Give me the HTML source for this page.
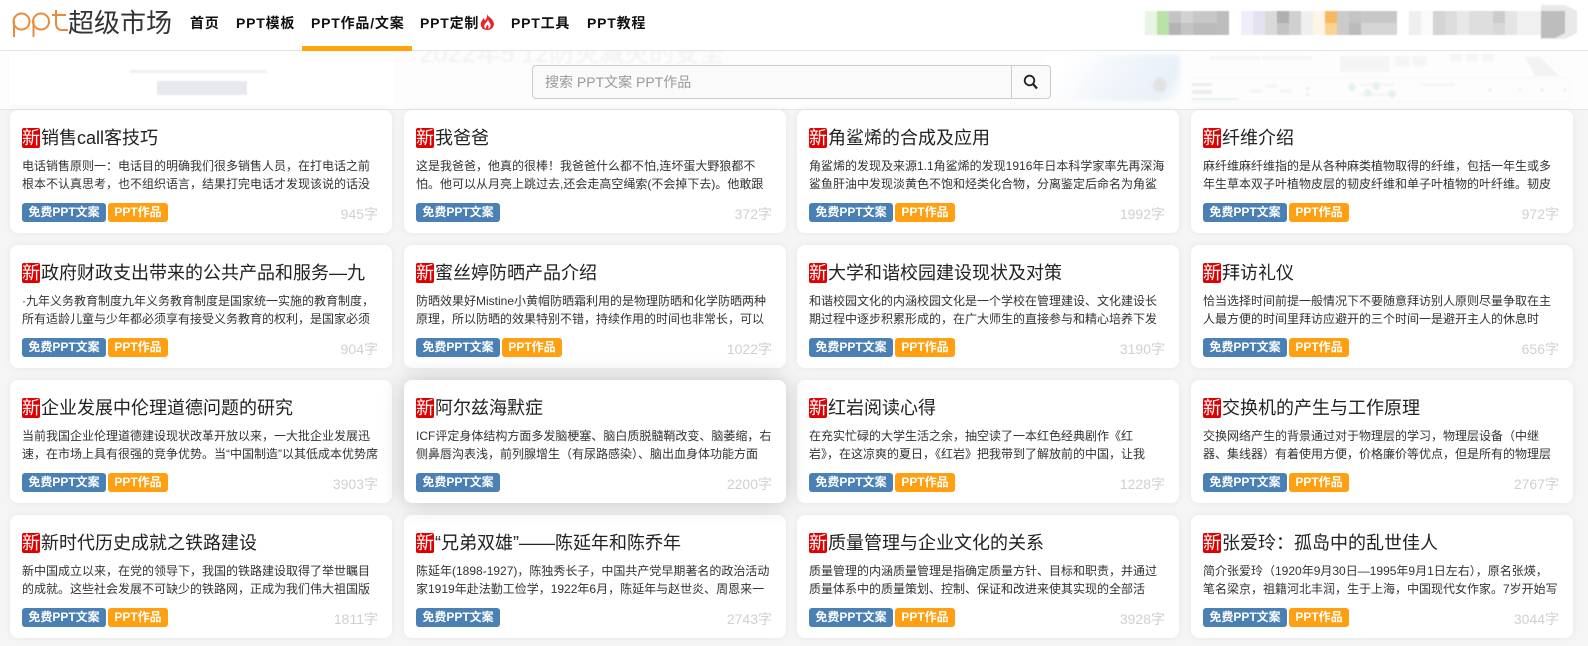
<!DOCTYPE html>
<html lang="zh-CN"><head><meta charset="utf-8"><title>PPT超级市场</title>
<style>
*{box-sizing:border-box;margin:0;padding:0}
html,body{width:1588px;height:646px;overflow:hidden;background:#f5f5f5;font-family:"Liberation Sans","Noto Sans CJK SC",sans-serif}
#hd{position:absolute;left:0;top:0;width:1588px;height:51px;background:#fff;border-bottom:1px solid #e4e4e4;z-index:3}
#hd a{position:absolute;top:13px;font-size:14px;line-height:20px;font-weight:bold;color:#111;letter-spacing:.8px;white-space:nowrap}
#bar{position:absolute;left:302px;top:46px;width:110px;height:5px;background:#ffa40a}
#logo{position:absolute;left:68px;top:6px;font-size:26px;line-height:34px;color:#333;white-space:nowrap}
#ban{position:absolute;left:0;top:51px;width:1588px;height:59px;background:#fdfdfd;border-bottom:1px solid #e6e6e6;overflow:hidden}
#sb{position:absolute;left:532px;top:65px;width:519px;height:34px;background:#fafafa;border:1px solid #ccc;border-radius:4px;z-index:2}
#sb span{position:absolute;left:12px;top:7px;font-size:14px;line-height:18px;color:#999}
#sb i{position:absolute;left:478px;top:0;width:1px;height:32px;background:#ccc}
.c{position:absolute;width:382px;height:123px;background:#fff;border-radius:8px;box-shadow:0 0 8px rgba(0,0,0,.06);overflow:hidden}
.c.h{box-shadow:0 0 24px rgba(0,0,0,.2);z-index:1}
.t{position:absolute;left:12px;top:16px;height:24px;line-height:24px;font-size:18px;color:#222;white-space:nowrap}
.t b{display:inline-block;width:18px;height:20px;line-height:20px;background:#e00000;color:#fff;font-weight:normal;font-size:18px;border-radius:2px;vertical-align:-4px;text-align:center;overflow:hidden;margin-right:1px}
.d{position:absolute;left:12px;top:47px;width:362px;height:36px;line-height:18px;font-size:12px;color:#333;overflow:hidden;white-space:nowrap}
.g{position:absolute;top:93px;height:19px;line-height:18px;text-align:center;font-size:12px;font-weight:bold;color:#fff;border-radius:3px;white-space:nowrap}
.a{left:12px;width:84px;background:#4a80b4}
.b{left:98px;width:60px;background:#ff9f12}
.n{position:absolute;right:14px;top:94px;line-height:20px;font-size:14px;color:#d0d0d0}
</style></head><body>
<div id="hd">
<svg style="position:absolute;left:12px;top:10px" width="58" height="28" viewBox="0 0 58 28" fill="none" stroke="#ec8a3c" stroke-width="2"><rect x="1.500" y="3.500" width="16" height="16" rx="8"/><path d="M2 11V27"/><rect x="21" y="3.500" width="16" height="16" rx="8"/><path d="M21.500 11V27"/><path d="M44 0V13Q44 20 50 20H56M40 5H54"/></svg>
<div id="logo">超级市场</div>
<a style="left:190px">首页</a><a style="left:236px">PPT模板</a><a style="left:311px">PPT作品/文案</a><a style="left:420px">PPT定制</a>
<svg style="position:absolute;left:480px;top:14px" width="15" height="16" viewBox="0 0 15 16"><path fill="#e8262a" d="M7 0C8 3 12 4 13.500 8C15 12 12 16 7.500 16C3 16 0 13 1 8.500C1.500 6.500 3 5.500 3.500 4C4.500 5 4.500 6 5 6.500C6.500 5 7.500 3 7 0Z"/><path fill="#fff" d="M8 5C8 8 11 9 10.500 12C10 14 9 14.500 8 15C9 13 8.500 11.500 7.500 10.500C7 12 5.500 12.500 6 15C4.500 14 4 12.500 4.500 11C5 9 8 8 8 5Z"/></svg>
<a style="left:511px">PPT工具</a><a style="left:587px">PPT教程</a>
<div id="bar"></div>
<svg style="position:absolute;left:1145px;top:5px;filter:blur(.6px)" width="432" height="36" viewBox="0 0 432 36">
<g fill="#e8f4e4"><rect x="0" y="6" width="12" height="24"/></g><rect x="12" y="6" width="12" height="24" fill="#b9e1a8"/>
<rect x="24" y="6" width="12" height="12" fill="#c4c4c4"/><rect x="24" y="18" width="12" height="12" fill="#b4b4b4"/>
<rect x="36" y="6" width="12" height="12" fill="#d2d2d2"/><rect x="36" y="18" width="12" height="12" fill="#c4c4c4"/>
<rect x="48" y="6" width="24" height="12" fill="#c8c8c8"/><rect x="48" y="18" width="24" height="12" fill="#bbb"/>
<rect x="72" y="6" width="12" height="24" fill="#bdbdbd"/>
<rect x="96" y="6" width="12" height="24" fill="#eeeef8"/><rect x="108" y="6" width="12" height="24" fill="#e4e2f0"/>
<rect x="120" y="6" width="12" height="24" fill="#dadada"/><rect x="132" y="6" width="12" height="12" fill="#b0b0b0"/><rect x="132" y="18" width="12" height="12" fill="#c4c4c4"/>
<rect x="144" y="6" width="12" height="24" fill="#d0d0d0"/><rect x="156" y="6" width="12" height="24" fill="#efefef"/><rect x="168" y="6" width="12" height="24" fill="#fff4e8"/>
<rect x="180" y="6" width="12" height="12" fill="#f6b860"/><rect x="180" y="18" width="12" height="12" fill="#fad490"/>
<rect x="192" y="6" width="12" height="24" fill="#cbcbcb"/><rect x="204" y="6" width="12" height="12" fill="#c4c4c4"/><rect x="204" y="18" width="12" height="12" fill="#bbb"/>
<rect x="216" y="6" width="36" height="12" fill="#c8c8c8"/><rect x="216" y="18" width="36" height="12" fill="#d6d6d6"/>
<rect x="264" y="6" width="12" height="24" fill="#efefef"/><rect x="276" y="6" width="12" height="24" fill="#fafafa"/>
<rect x="288" y="6" width="12" height="24" fill="#d4d4d4"/><rect x="300" y="6" width="12" height="24" fill="#dcdcdc"/><rect x="312" y="6" width="12" height="24" fill="#e8e8e8"/>
<rect x="324" y="6" width="24" height="24" fill="#dedede"/><rect x="348" y="6" width="12" height="12" fill="#ccc"/><rect x="348" y="18" width="12" height="12" fill="#d8d8d8"/>
<rect x="360" y="6" width="12" height="24" fill="#e4e4e4"/><rect x="372" y="6" width="24" height="24" fill="#f0f0f0"/>
<path d="M396 0H420L432 6V28L420 34H396Z" fill="#e9e9e9"/><path d="M396 6H420V28L410 33H396Z" fill="#bdbdbd"/>
</svg>
</div>
<div id="ban">
<div style="position:absolute;left:8px;top:3px;width:388px;height:52px;border:1px solid #fafafa;background:#fff"></div>
<div style="position:absolute;left:130px;top:19px;width:137px;height:3px;background:#f0f0f0;filter:blur(.6px)"></div>
<div style="position:absolute;left:157px;top:30px;width:90px;height:14px;background:#e6e8ec;filter:blur(.5px)"></div>
<div style="position:absolute;left:420px;top:-13px;font-size:25px;line-height:32px;color:#f0f0f0;white-space:nowrap;filter:blur(1px)">2022年5 12防灾减灾的安全</div>
<div style="position:absolute;left:1045px;top:4px;width:135px;height:46px;background:linear-gradient(125deg,#fff 15%,#eef4fa 60%,#e8f0f8 85%,#fff 100%);filter:blur(2px)"></div>
<div style="position:absolute;left:1153px;top:27px;width:14px;height:14px;border-radius:50%;background:#e2e2e2;filter:blur(1px)"></div>
<svg style="position:absolute;left:1190px;top:0;filter:blur(.9px);opacity:.5" width="390" height="56" viewBox="0 0 390 56">
<rect x="0" y="27" width="380" height="24" fill="none" stroke="#f3f3f3"/>
<rect x="2" y="32" width="20" height="3" fill="#ddd"/><rect x="2" y="39" width="20" height="4" fill="#ddd"/><rect x="2" y="47" width="46" height="2" fill="#cfe6dc"/>
<g fill="#eee"><rect x="60" y="38" width="12" height="4"/><rect x="75" y="33" width="12" height="4"/><rect x="90" y="38" width="12" height="4"/><rect x="20" y="5" width="50" height="4"/><rect x="72" y="5" width="50" height="4"/><rect x="150" y="5" width="50" height="16"/><rect x="205" y="5" width="15" height="10"/><rect x="222" y="5" width="15" height="10"/><rect x="260" y="3" width="12" height="8"/><rect x="276" y="3" width="12" height="8"/><rect x="292" y="3" width="12" height="8"/><rect x="230" y="32" width="35" height="3"/><rect x="170" y="32" width="35" height="3"/><rect x="170" y="42" width="35" height="3"/></g>
<g fill="#d2e8de"><circle cx="162" cy="36" r="4"/><circle cx="178" cy="42" r="4"/><circle cx="186" cy="35" r="4"/><circle cx="202" cy="43" r="4"/></g>
<g fill="#ddd"><circle cx="300" cy="39" r="1.500"/><circle cx="330" cy="39" r="1.500"/><circle cx="352" cy="39" r="1.500"/><circle cx="375" cy="39" r="1.500"/><rect x="116" y="36" width="3" height="3"/><rect x="116" y="42" width="3" height="3"/></g>
<path d="M335 6L350 6L370 25L345 25Z" fill="#eaeaea"/></svg>
</div>
<div id="sb"><span>搜索 PPT文案 PPT作品</span><i></i>
<svg style="position:absolute;left:490px;top:8px" width="16" height="16" viewBox="0 0 16 16" fill="none" stroke="#222" stroke-width="1.800"><circle cx="6.500" cy="6.500" r="4.800"/><path d="M10 10L14 14.500" stroke-width="2.200"/></svg></div>

<div class="c" style="left:10px;top:110px"><div class="t"><b>新</b>销售call客技巧</div><div class="d">电话销售原则一：电话目的明确我们很多销售人员，在打电话之前<br>根本不认真思考，也不组织语言，结果打完电话才发现该说的话没</div><span class="g a">免费PPT文案</span><span class="g b">PPT作品</span><span class="n">945字</span></div>
<div class="c" style="left:404px;top:110px"><div class="t"><b>新</b>我爸爸</div><div class="d">这是我爸爸，他真的很棒！我爸爸什么都不怕,连坏蛋大野狼都不<br>怕。他可以从月亮上跳过去,还会走高空绳索(不会掉下去)。他敢跟</div><span class="g a">免费PPT文案</span><span class="n">372字</span></div>
<div class="c" style="left:797px;top:110px"><div class="t"><b>新</b>角鲨烯的合成及应用</div><div class="d">角鲨烯的发现及来源1.1角鲨烯的发现1916年日本科学家率先再深海<br>鲨鱼肝油中发现淡黄色不饱和烃类化合物，分离鉴定后命名为角鲨</div><span class="g a">免费PPT文案</span><span class="g b">PPT作品</span><span class="n">1992字</span></div>
<div class="c" style="left:1191px;top:110px"><div class="t"><b>新</b>纤维介绍</div><div class="d">麻纤维麻纤维指的是从各种麻类植物取得的纤维，包括一年生或多<br>年生草本双子叶植物皮层的韧皮纤维和单子叶植物的叶纤维。韧皮</div><span class="g a">免费PPT文案</span><span class="g b">PPT作品</span><span class="n">972字</span></div>

<div class="c" style="left:10px;top:245px"><div class="t"><b>新</b>政府财政支出带来的公共产品和服务—九</div><div class="d">·九年义务教育制度九年义务教育制度是国家统一实施的教育制度，<br>所有适龄儿童与少年都必须享有接受义务教育的权利，是国家必须</div><span class="g a">免费PPT文案</span><span class="g b">PPT作品</span><span class="n">904字</span></div>
<div class="c" style="left:404px;top:245px"><div class="t"><b>新</b>蜜丝婷防晒产品介绍</div><div class="d">防晒效果好Mistine小黄帽防晒霜利用的是物理防晒和化学防晒两种<br>原理，所以防晒的效果特别不错，持续作用的时间也非常长，可以</div><span class="g a">免费PPT文案</span><span class="g b">PPT作品</span><span class="n">1022字</span></div>
<div class="c" style="left:797px;top:245px"><div class="t"><b>新</b>大学和谐校园建设现状及对策</div><div class="d">和谐校园文化的内涵校园文化是一个学校在管理建设、文化建设长<br>期过程中逐步积累形成的，在广大师生的直接参与和精心培养下发</div><span class="g a">免费PPT文案</span><span class="g b">PPT作品</span><span class="n">3190字</span></div>
<div class="c" style="left:1191px;top:245px"><div class="t"><b>新</b>拜访礼仪</div><div class="d">恰当选择时间前提一般情况下不要随意拜访别人原则尽量争取在主<br>人最方便的时间里拜访应避开的三个时间一是避开主人的休息时</div><span class="g a">免费PPT文案</span><span class="g b">PPT作品</span><span class="n">656字</span></div>

<div class="c" style="left:10px;top:380px"><div class="t"><b>新</b>企业发展中伦理道德问题的研究</div><div class="d">当前我国企业伦理道德建设现状改革开放以来，一大批企业发展迅<br>速，在市场上具有很强的竞争优势。当“中国制造”以其低成本优势席</div><span class="g a">免费PPT文案</span><span class="g b">PPT作品</span><span class="n">3903字</span></div>
<div class="c h" style="left:404px;top:380px"><div class="t"><b>新</b>阿尔兹海默症</div><div class="d">ICF评定身体结构方面多发脑梗塞、脑白质脱髓鞘改变、脑萎缩，右<br>侧鼻唇沟表浅，前列腺增生（有尿路感染）、脑出血身体功能方面</div><span class="g a">免费PPT文案</span><span class="n">2200字</span></div>
<div class="c" style="left:797px;top:380px"><div class="t"><b>新</b>红岩阅读心得</div><div class="d">在充实忙碌的大学生活之余，抽空读了一本红色经典剧作《红<br>岩》，在这凉爽的夏日，《红岩》把我带到了解放前的中国，让我</div><span class="g a">免费PPT文案</span><span class="g b">PPT作品</span><span class="n">1228字</span></div>
<div class="c" style="left:1191px;top:380px"><div class="t"><b>新</b>交换机的产生与工作原理</div><div class="d">交换网络产生的背景通过对于物理层的学习，物理层设备（中继<br>器、集线器）有着使用方便，价格廉价等优点，但是所有的物理层</div><span class="g a">免费PPT文案</span><span class="g b">PPT作品</span><span class="n">2767字</span></div>

<div class="c" style="left:10px;top:515px"><div class="t"><b>新</b>新时代历史成就之铁路建设</div><div class="d">新中国成立以来，在党的领导下，我国的铁路建设取得了举世瞩目<br>的成就。这些社会发展不可缺少的铁路网，正成为我们伟大祖国版</div><span class="g a">免费PPT文案</span><span class="g b">PPT作品</span><span class="n">1811字</span></div>
<div class="c" style="left:404px;top:515px"><div class="t"><b>新</b>“兄弟双雄”——陈延年和陈乔年</div><div class="d">陈延年(1898-1927)，陈独秀长子，中国共产党早期著名的政治活动<br>家1919年赴法勤工俭学，1922年6月，陈延年与赵世炎、周恩来一</div><span class="g a">免费PPT文案</span><span class="n">2743字</span></div>
<div class="c" style="left:797px;top:515px"><div class="t"><b>新</b>质量管理与企业文化的关系</div><div class="d">质量管理的内涵质量管理是指确定质量方针、目标和职责，并通过<br>质量体系中的质量策划、控制、保证和改进来使其实现的全部活</div><span class="g a">免费PPT文案</span><span class="g b">PPT作品</span><span class="n">3928字</span></div>
<div class="c" style="left:1191px;top:515px"><div class="t"><b>新</b>张爱玲：孤岛中的乱世佳人</div><div class="d">简介张爱玲（1920年9月30日—1995年9月1日左右），原名张煐，<br>笔名梁京，祖籍河北丰润，生于上海，中国现代女作家。7岁开始写</div><span class="g a">免费PPT文案</span><span class="g b">PPT作品</span><span class="n">3044字</span></div>
</body></html>
